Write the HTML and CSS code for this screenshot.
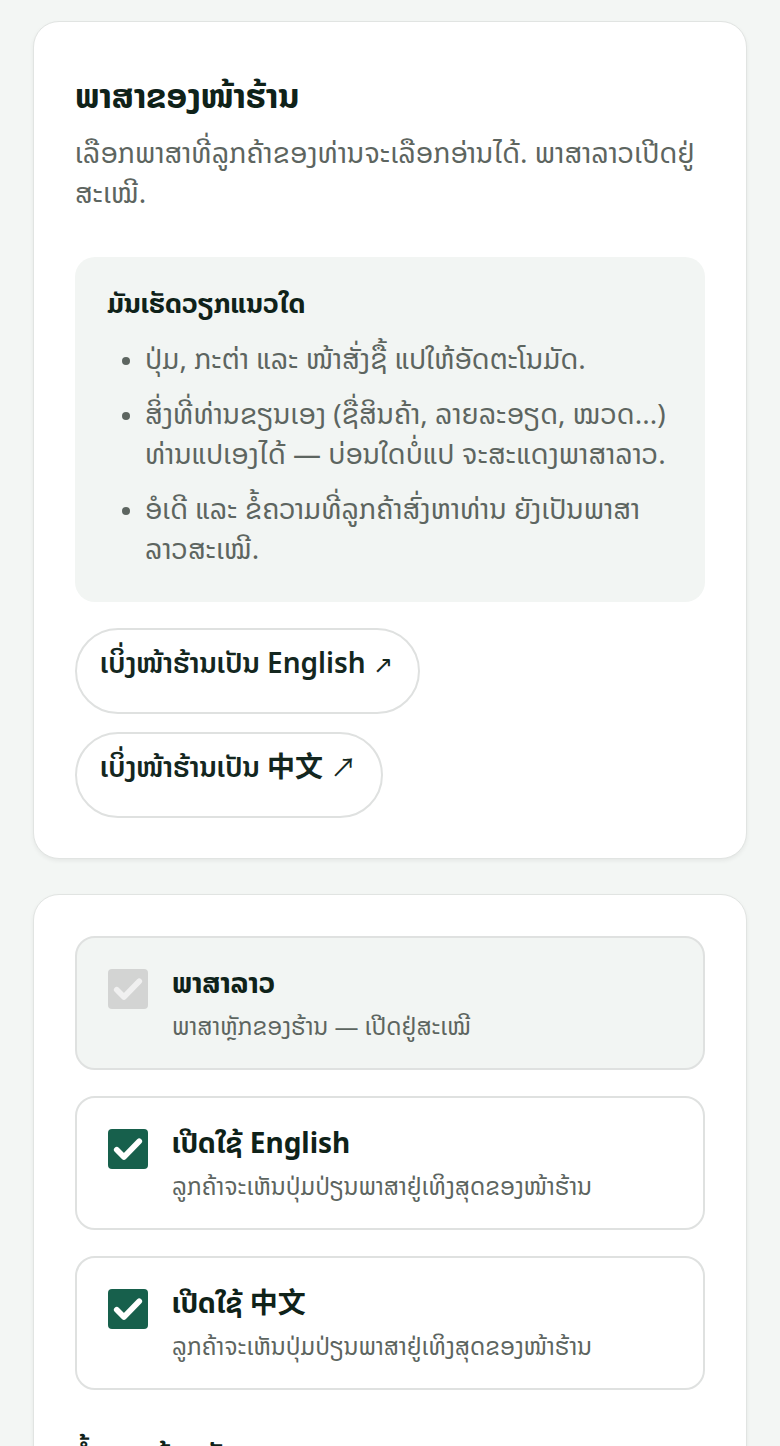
FILE: index.html
```html
<!DOCTYPE html>
<html lang="lo">
<head>
<meta charset="utf-8">
<title>ພາສາຂອງໜ້າຮ້ານ</title>
<link rel="stylesheet" href="styles.css">
</head>
<body>
<main class="page">
  <section class="card">
    <h1 class="title">ພາສາຂອງໜ້າຮ້ານ</h1>
    <p class="desc">ເລືອກພາສາທີ່ລູກຄ້າຂອງທ່ານຈະເລືອກອ່ານໄດ້. ພາສາລາວເປີດຢູ່ສະເໝີ.</p>
    <div class="info">
      <h2 class="info-title">ມັນເຮັດວຽກແນວໃດ</h2>
      <ul class="info-list">
        <li>ປຸ່ມ, ກະຕ່າ ແລະ ໜ້າສັ່ງຊື້ ແປໃຫ້ອັດຕະໂນມັດ.</li>
        <li>ສິ່ງທີ່ທ່ານຂຽນເອງ (ຊື່ສິນຄ້າ, ລາຍລະອຽດ, ໝວດ...) ທ່ານແປເອງໄດ້ — ບ່ອນໃດບໍ່ແປ ຈະສະແດງພາສາລາວ.</li>
        <li>ອໍເດີ ແລະ ຂໍ້ຄວາມທີ່ລູກຄ້າສົ່ງຫາທ່ານ ຍັງເປັນພາສາລາວສະເໝີ.</li>
      </ul>
    </div>
    <div class="links">
      <a class="pill" href="#">ເບິ່ງໜ້າຮ້ານເປັນ English <span class="arrow">↗</span></a>
      <a class="pill" href="#">ເບິ່ງໜ້າຮ້ານເປັນ <span class="zh">中文</span> <span class="arrow arrow-zh">↗</span></a>
    </div>
  </section>

  <section class="card card-options">
    <label class="option option-locked">
      <span class="box box-disabled"><svg viewBox="0 0 24 24" class="tick"><path d="M4.5 12.5l4.8 4.8L19.5 6.8" /></svg></span>
      <span class="option-text">
        <span class="option-title">ພາສາລາວ</span>
        <span class="option-sub">ພາສາຫຼັກຂອງຮ້ານ — ເປີດຢູ່ສະເໝີ</span>
      </span>
    </label>
    <label class="option">
      <span class="box box-on"><svg viewBox="0 0 24 24" class="tick"><path d="M4.5 12.5l4.8 4.8L19.5 6.8" /></svg></span>
      <span class="option-text">
        <span class="option-title">ເປີດໃຊ້ English</span>
        <span class="option-sub">ລູກຄ້າຈະເຫັນປຸ່ມປ່ຽນພາສາຢູ່ເທິງສຸດຂອງໜ້າຮ້ານ</span>
      </span>
    </label>
    <label class="option">
      <span class="box box-on"><svg viewBox="0 0 24 24" class="tick"><path d="M4.5 12.5l4.8 4.8L19.5 6.8" /></svg></span>
      <span class="option-text">
        <span class="option-title">ເປີດໃຊ້ <span class="zh">中文</span></span>
        <span class="option-sub">ລູກຄ້າຈະເຫັນປຸ່ມປ່ຽນພາສາຢູ່ເທິງສຸດຂອງໜ້າຮ້ານ</span>
      </span>
    </label>
    <h2 class="section-title">ຂໍ້ຄວາມຕ້ອນຮັບ</h2>
  </section>
</main>
</body>
</html>
```

FILE: styles.css
```css
* { box-sizing: border-box; }
html, body { margin: 0; padding: 0; }
body {
  background: #f3f6f4;
  font-family: "Noto Sans", "Noto Sans Lao", "DejaVu Sans", sans-serif;
  color: #14271f;
}
.page {
  padding: 21px 33px 40px;
  display: flex;
  flex-direction: column;
  gap: 35px;
}
.card {
  background: #fff;
  border: 1px solid #e1e4e2;
  border-radius: 26px;
  box-shadow: 0 2px 4px rgba(0,0,0,0.06);
  padding: 51px 41px 40px;
}
.title {
  margin: 0;
  font-size: 34px;
  font-weight: 700;
  line-height: 44px;
  color: #0f2219;
}
.desc {
  margin: 15px 0 0;
  font-size: 28px;
  line-height: 40px;
  color: #5d6560;
}
.info {
  margin-top: 45px;
  background: #f2f5f3;
  border-radius: 20px;
  padding: 26px 32px 34px;
}
.info-title {
  margin: 0;
  font-size: 27px;
  font-weight: 700;
  line-height: 40px;
  color: #0f2219;
}
.info-list {
  margin: 15px 0 0;
  padding: 0 0 0 38px;
  font-size: 28px;
  line-height: 40px;
  color: #5d6560;
}
.info-list li { margin-bottom: 15px; }
.info-list li:last-child { margin-bottom: 0; }
.info-list li::marker { color: #5d6560; font-size: 22px; }
.links {
  margin-top: 26px;
  display: flex;
  flex-direction: column;
  align-items: flex-start;
  gap: 18px;
}
.pill {
  display: inline-block;
  height: 86px;
  border: 2px solid #dfe1e0;
  border-radius: 44px;
  padding: 12px 25px 0 23px;
  font-size: 28px;
  font-weight: 600;
  line-height: 40px;
  color: #14271f;
  text-decoration: none;
}
.arrow {
  font-weight: 400;
  font-size: 24px;
  line-height: 1;
}
.arrow-zh {
  font-family: "Noto Sans CJK SC", sans-serif;
  font-size: 26px;
}
.zh {
  font-family: "Noto Sans CJK SC", sans-serif;
  font-weight: 700;
  line-height: 1;
}
.card-options {
  padding-top: 41px;
  display: flex;
  flex-direction: column;
  gap: 26px;
}
.option {
  display: flex;
  align-items: flex-start;
  gap: 24px;
  border: 2px solid #dfe1e0;
  border-radius: 20px;
  padding: 26px 31px 26px;
  background: #fff;
}
.option-locked { background: #f2f5f3; }
.box {
  flex: none;
  width: 40px;
  height: 40px;
  border-radius: 4px;
  display: flex;
  align-items: center;
  justify-content: center;
  margin-top: 5px;
}
.box-on { background: #17604c; }
.box-disabled { background: #d3d4d3; }
.tick {
  width: 36px;
  height: 36px;
  fill: none;
  stroke: #fff;
  stroke-width: 3.8;
  stroke-linecap: round;
  stroke-linejoin: round;
}
.box-disabled .tick { stroke: #f0f0f0; }
.option-text {
  display: flex;
  flex-direction: column;
  gap: 10px;
}
.option-title {
  font-size: 28px;
  font-weight: 700;
  line-height: 36px;
  color: #0f2219;
}
.option-sub {
  font-size: 24px;
  line-height: 32px;
  color: #5d6560;
}
.section-title {
  margin: 18px 0 0;
  font-size: 28px;
  font-weight: 700;
  line-height: 40px;
  color: #0f2219;
}
```
